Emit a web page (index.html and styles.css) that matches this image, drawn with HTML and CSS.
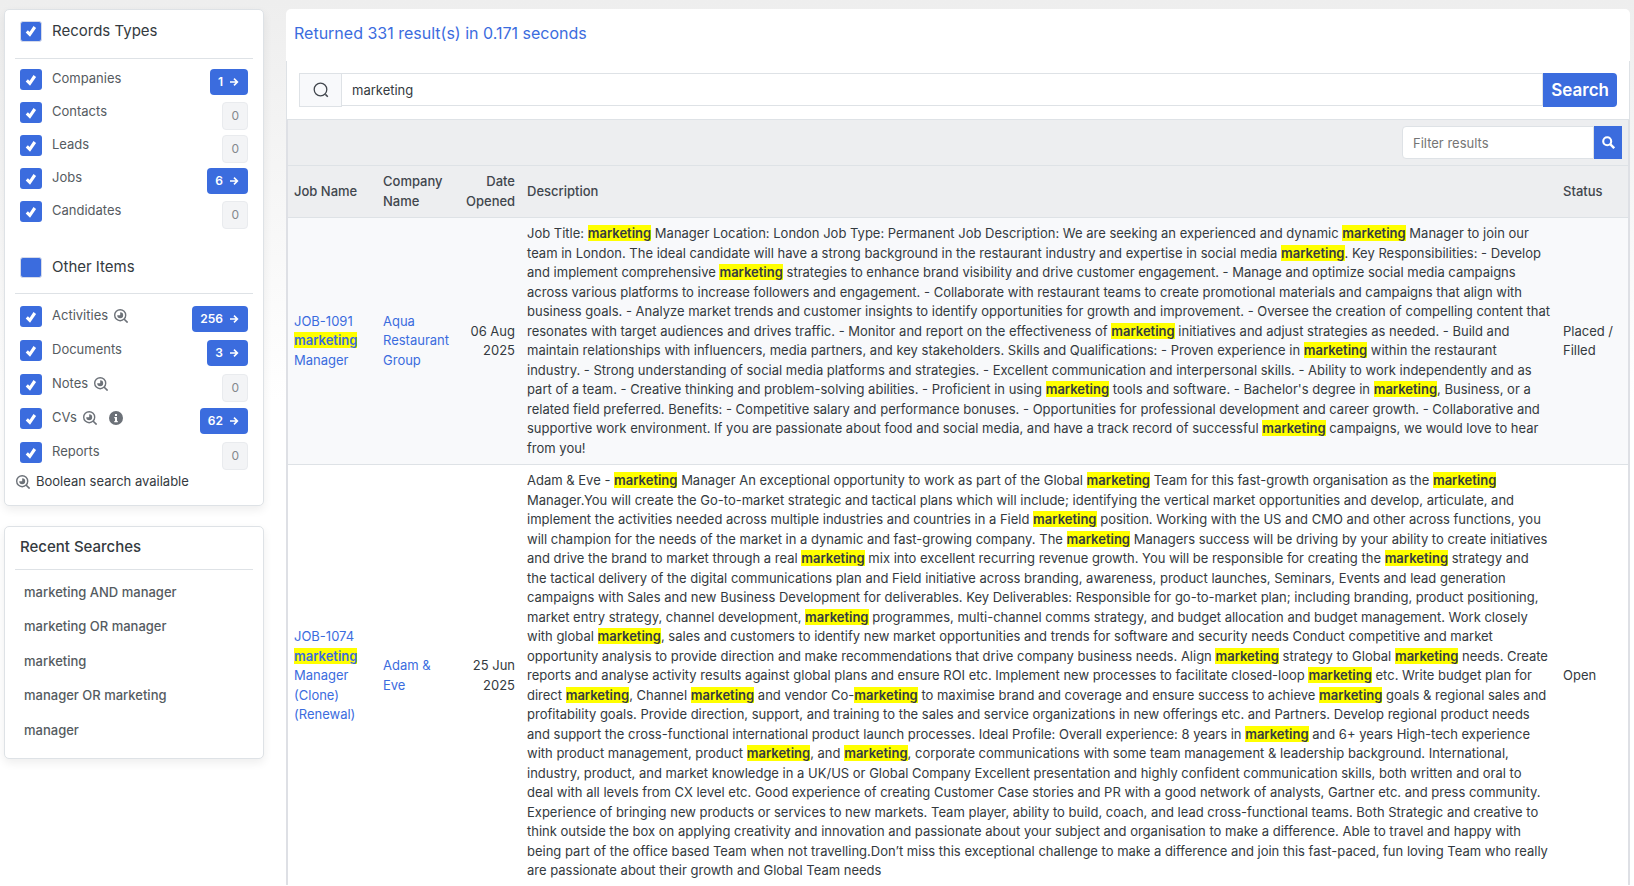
FILE: index.html
```
<!DOCTYPE html>
<html lang="en">
<head>
    <meta charset="UTF-8">
    <meta name="viewport" content="width=device-width, initial-scale=1.0">
    <title>Search Results</title>
    <link rel="stylesheet" href="styles.css">
</head>
<body>
    <!-- shared icons -->
    <svg width="0" height="0" class="sprite">
        <symbol id="bool" viewBox="0 0 14 14">
            <circle cx="6.2" cy="6.2" r="5.5" fill="none" stroke="currentColor" stroke-width="1.4"/>
            <path d="M10 10l3.6 3.6" stroke="currentColor" stroke-width="1.6"/>
            <path d="M6.2 3.2A3 3 0 1 1 3.2 6.2L6.2 6.2z" fill="currentColor"/>
        </symbol>
        <symbol id="arrow" viewBox="0 0 10 10">
            <path d="M1 5h7M5 1.6L8.4 5 5 8.4" fill="none" stroke="currentColor" stroke-width="1.6"/>
        </symbol>
        <symbol id="info" viewBox="0 0 14 14">
            <circle cx="7" cy="7" r="7" fill="currentColor"/>
            <path d="M6 3h2v2H6zM5.3 6H8v4h.8v1.2H5.3V10H6V7.2h-.7z" fill="#fff"/>
        </symbol>
    </svg>

    <div class="layout">
        <aside class="sidebar">
            <div class="card">
                <div class="card-title">
                    <input type="checkbox" id="records" checked>
                    <label for="records">Records Types</label>
                </div>
                <ul class="types">
                    <li><input type="checkbox" id="companies" checked><label for="companies">Companies</label><a href="#" class="badge">1 <svg class="arrow"><use href="#arrow"/></svg></a></li>
                    <li><input type="checkbox" id="contacts" checked><label for="contacts">Contacts</label><span class="badge empty">0</span></li>
                    <li><input type="checkbox" id="leads" checked><label for="leads">Leads</label><span class="badge empty">0</span></li>
                    <li><input type="checkbox" id="jobs" checked><label for="jobs">Jobs</label><a href="#" class="badge">6 <svg class="arrow"><use href="#arrow"/></svg></a></li>
                    <li><input type="checkbox" id="candidates" checked><label for="candidates">Candidates</label><span class="badge empty">0</span></li>
                </ul>
                <div class="card-title other">
                    <input type="checkbox" id="other">
                    <label for="other">Other Items</label>
                </div>
                <ul class="types items">
                    <li><input type="checkbox" id="activities" checked><label for="activities">Activities</label><svg class="icon"><use href="#bool"/></svg><a href="#" class="badge">256 <svg class="arrow"><use href="#arrow"/></svg></a></li>
                    <li><input type="checkbox" id="documents" checked><label for="documents">Documents</label><a href="#" class="badge">3 <svg class="arrow"><use href="#arrow"/></svg></a></li>
                    <li><input type="checkbox" id="notes" checked><label for="notes">Notes</label><svg class="icon"><use href="#bool"/></svg><span class="badge empty">0</span></li>
                    <li><input type="checkbox" id="cvs" checked><label for="cvs">CVs</label><svg class="icon"><use href="#bool"/></svg><svg class="icon info"><use href="#info"/></svg><a href="#" class="badge">62 <svg class="arrow"><use href="#arrow"/></svg></a></li>
                    <li><input type="checkbox" id="reports" checked><label for="reports">Reports</label><span class="badge empty">0</span></li>
                </ul>
                <div class="note"><svg class="icon"><use href="#bool"/></svg>Boolean search available</div>
            </div>

            <div class="card recent">
                <h2>Recent Searches</h2>
                <ul>
                    <li><a href="#">marketing AND manager</a></li>
                    <li><a href="#">marketing OR manager</a></li>
                    <li><a href="#">marketing</a></li>
                    <li><a href="#">manager OR marketing</a></li>
                    <li><a href="#">manager</a></li>
                </ul>
            </div>
        </aside>

        <main class="results">
            <h1>Returned 331 result(s) in 0.171 seconds</h1>
            <form class="search">
                <label for="q" class="search-icon" aria-label="Search">
                    <svg width="16" height="16" viewBox="0 0 16 16"><circle cx="7.5" cy="7.5" r="6.3" fill="none" stroke="#41464d" stroke-width="1.3"/><path d="M12.4 12.4l2.4 2.4" stroke="#41464d" stroke-width="1.5"/></svg>
                </label>
                <input type="text" id="q" value="marketing">
                <button type="submit">Search</button>
            </form>
            <div class="panel">
                <form class="filter">
                    <input type="text" placeholder="Filter results" aria-label="Filter results">
                    <button type="submit" aria-label="Filter">
                        <svg width="13" height="13" viewBox="0 0 13 13"><circle cx="5.2" cy="5.2" r="4" fill="none" stroke="#fff" stroke-width="2.1"/><path d="M8.2 8.2l4 4" stroke="#fff" stroke-width="2.4"/></svg>
                    </button>
                </form>
                <table>
                    <colgroup>
                        <col class="col-job">
                        <col class="col-company">
                        <col class="col-date">
                        <col>
                        <col class="col-status">
                    </colgroup>
                    <thead>
                        <tr>
                            <th>Job Name</th>
                            <th>Company Name</th>
                            <th class="date">Date Opened</th>
                            <th>Description</th>
                            <th>Status</th>
                        </tr>
                    </thead>
                    <tbody>
                        <tr>
                            <td><a href="#">JOB-1091 <mark>marketing</mark> Manager</a></td>
                            <td><a href="#">Aqua Restaurant Group</a></td>
                            <td class="date">06 Aug 2025</td>
                            <td>Job Title: <mark>marketing</mark> Manager Location: London Job Type: Permanent Job Description: We are seeking an experienced and dynamic <mark>marketing</mark> Manager to join our team in London. The ideal candidate will have a strong background in the restaurant industry and expertise in social media <mark>marketing</mark>. Key Responsibilities: - Develop and implement comprehensive <mark>marketing</mark> strategies to enhance brand visibility and drive customer engagement. - Manage and optimize social media campaigns across various platforms to increase followers and engagement. - Collaborate with restaurant teams to create promotional materials and campaigns that align with business goals. - Analyze market trends and customer insights to identify opportunities for growth and improvement. - Oversee the creation of compelling content that resonates with target audiences and drives traffic. - Monitor and report on the effectiveness of <mark>marketing</mark> initiatives and adjust strategies as needed. - Build and maintain relationships with influencers, media partners, and key stakeholders. Skills and Qualifications: - Proven experience in <mark>marketing</mark> within the restaurant industry. - Strong understanding of social media platforms and strategies. - Excellent communication and interpersonal skills. - Ability to work independently and as part of a team. - Creative thinking and problem-solving abilities. - Proficient in using <mark>marketing</mark> tools and software. - Bachelor's degree in <mark>marketing</mark>, Business, or a related field preferred. Benefits: - Competitive salary and performance bonuses. - Opportunities for professional development and career growth. - Collaborative and supportive work environment. If you are passionate about food and social media, and have a track record of successful <mark>marketing</mark> campaigns, we would love to hear from you!</td>
                            <td>Placed / Filled</td>
                        </tr>
                        <tr>
                            <td><a href="#">JOB-1074 <mark>marketing</mark> Manager (Clone) (Renewal)</a></td>
                            <td><a href="#">Adam &amp; Eve</a></td>
                            <td class="date">25 Jun 2025</td>
                            <td>Adam &amp; Eve - <mark>marketing</mark> Manager An exceptional opportunity to work as part of the Global <mark>marketing</mark> Team for this fast-growth organisation as the <mark>marketing</mark> Manager.You will create the Go-to-market strategic and tactical plans which will include; identifying the vertical market opportunities and develop, articulate, and implement the activities needed across multiple industries and countries in a Field <mark>marketing</mark> position. Working with the US and CMO and other across functions, you will champion for the needs of the market in a dynamic and fast-growing company. The <mark>marketing</mark> Managers success will be driving by your ability to create initiatives and drive the brand to market through a real <mark>marketing</mark> mix into excellent recurring revenue growth. You will be responsible for creating the <mark>marketing</mark> strategy and the tactical delivery of the digital communications plan and Field initiative across branding, awareness, product launches, Seminars, Events and lead generation campaigns with Sales and new Business Development for deliverables. Key Deliverables: Responsible for go-to-market plan; including branding, product positioning, market entry strategy, channel development, <mark>marketing</mark> programmes, multi-channel comms strategy, and budget allocation and budget management. Work closely with global <mark>marketing</mark>, sales and customers to identify new market opportunities and trends for software and security needs Conduct competitive and market opportunity analysis to provide direction and make recommendations that drive company business needs. Align <mark>marketing</mark> strategy to Global <mark>marketing</mark> needs. Create reports and analyse activity results against global plans and ensure ROI etc. Implement new processes to facilitate closed-loop <mark>marketing</mark> etc. Write budget plan for direct <mark>marketing</mark>, Channel <mark>marketing</mark> and vendor Co-<mark>marketing</mark> to maximise brand and coverage and ensure success to achieve <mark>marketing</mark> goals &amp; regional sales and profitability goals. Provide direction, support, and training to the sales and service organizations in new offerings etc. and Partners. Develop regional product needs and support the cross-functional international product launch processes. Ideal Profile: Overall experience: 8 years in <mark>marketing</mark> and 6+ years High-tech experience with product management, product <mark>marketing</mark>, and <mark>marketing</mark>, corporate communications with some team management &amp; leadership background. International, industry, product, and market knowledge in a UK/US or Global Company Excellent presentation and highly confident communication skills, both written and oral to deal with all levels from CX level etc. Good experience of creating Customer Case stories and PR with a good network of analysts, Gartner etc. and press community. Experience of bringing new products or services to new markets. Team player, ability to build, coach, and lead cross-functional teams. Both Strategic and creative to think outside the box on applying creativity and innovation and passionate about your subject and organisation to make a difference. Able to travel and happy with being part of the office based Team when not travelling.Don’t miss this exceptional challenge to make a difference and join this fast-paced, fun loving Team who really are passionate about their growth and Global Team needs</td>
                            <td>Open</td>
                        </tr>
                    </tbody>
                </table>
            </div>
        </main>
    </div>
</body>
</html>
```

FILE: styles.css
```
* {
    box-sizing: border-box;
}
html {
    background: #fff;
}
body {
    margin: 0;
    font-family: Inter, "Liberation Sans", sans-serif;
    font-size: 13px;
    line-height: 1.5;
    color: #343a40;
    background: linear-gradient(#eeeeee, #ffffff 400px) no-repeat;
}
a {
    color: #3b6cde;
    text-decoration: none;
}
ul {
    list-style: none;
    margin: 0;
    padding: 0;
}
input, button {
    font-family: inherit;
    font-size: 13px;
    margin: 0;
}
.sprite {
    position: absolute;
}
.layout {
    display: flex;
    align-items: flex-start;
    gap: 22px;
    padding: 9px 4px 0;
}

/* sidebar */
.sidebar {
    width: 260px;
    flex: none;
}
.card {
    background: #fff;
    border: 1px solid #dee2e6;
    border-radius: 5px;
    padding: 0 10px 13px;
    margin-bottom: 20px;
    box-shadow: 0 4px 10px rgba(0, 0, 0, 0.07);
}
.card-title {
    display: flex;
    align-items: center;
    height: 49px;
    padding: 0 5px 6px;
    border-bottom: 1px solid #dee2e6;
    font-size: 15px;
    color: #343a40;
}
.card-title.other {
    margin-top: 13px;
    height: 47px;
    padding-bottom: 5px;
}
input[type="checkbox"] {
    appearance: none;
    flex: none;
    width: 22px;
    height: 21px;
    border-radius: 3px;
    background: #3b6cde;
    margin-right: 10px;
}
.card-title input[type="checkbox"] {
    border: 1px solid #d5daea;
}
input[type="checkbox"]:checked {
    background: #3b6cde url("data:image/svg+xml,%3Csvg xmlns='http://www.w3.org/2000/svg' viewBox='0 0 12 12'%3E%3Cpath d='M1.8 6.4l3 2.9L9.8 2' fill='none' stroke='%23fff' stroke-width='3.1'/%3E%3C/svg%3E") center / 12px 12px no-repeat;
}
.types {
    padding-top: 10px;
}
.types li {
    display: flex;
    align-items: flex-start;
    height: 33px;
    padding: 0 5px;
    color: #555b61;
}
.types.items {
    padding-top: 12px;
}
.types.items li {
    height: 34px;
}
.badge {
    display: flex;
    align-items: center;
    gap: 6px;
    height: 26px;
    margin-left: auto;
    padding: 0 9px 0 8px;
    border-radius: 4px;
    background: #3b6cde;
    color: #fff;
    font-size: 12px;
    font-weight: 600;
}
.badge.empty {
    height: 28px;
    padding: 0 8px;
    border: 1px solid #e9ebee;
    background: #f3f4f6;
    color: #84888d;
    font-weight: 400;
}
.arrow {
    width: 10px;
    height: 10px;
}
.icon {
    width: 14px;
    height: 14px;
    margin: 3px 0 0 6px;
    color: #6c7178;
}
.icon.info {
    margin-left: 12px;
}
.note {
    display: flex;
    margin-top: -4px;
}
.note .icon {
    margin: 3px 6px 0 1px;
}
.recent {
    padding-bottom: 10px;
}
.recent h2 {
    margin: 0;
    height: 43px;
    padding: 9px 5px 0;
    border-bottom: 1px solid #dee2e6;
    font-size: 15px;
    font-weight: 500;
}
.recent ul {
    padding-top: 6px;
}
.recent li {
    padding: 7px 9px 8px;
}
.recent a {
    color: #555b61;
    font-weight: 500;
}

/* results */
.results {
    flex: 1;
    min-width: 0;
    background: #fff;
    border-radius: 5px 5px 0 0;
}
h1 {
    margin: 0;
    height: 52px;
    padding: 12px 8px 0;
    font-size: 16px;
    font-weight: 400;
    color: #3b6cde;
}
.search {
    display: flex;
    padding: 12px;
    border: 1px solid #dee2e6;
    border-top: 0;
}
.search-icon {
    display: flex;
    align-items: center;
    justify-content: center;
    width: 43px;
    height: 34px;
    background: #f8f9fb;
    border: 1px solid #dee2e6;
}
.search input {
    flex: 1;
    height: 33px;
    padding: 0 10px;
    border: 1px solid #dee2e6;
    border-left: 0;
    color: #343a40;
}
.search button {
    height: 34px;
    padding: 0 8px;
    border: 0;
    border-radius: 0 4px 4px 0;
    background: #3b6cde;
    color: #fff;
    font-size: 17px;
    font-weight: 600;
}
.panel {
    border: 2px solid #dee0e5;
    border-width: 0 2px;
}
.filter {
    display: flex;
    justify-content: flex-end;
    padding: 6px;
    background: #edeef0;
    border-bottom: 1px solid #dee2e6;
}
.filter input {
    width: 192px;
    height: 33px;
    padding: 0 10px;
    border: 1px solid #dee2e6;
    border-radius: 4px 0 0 4px;
}
.filter button {
    display: flex;
    align-items: center;
    justify-content: center;
    width: 28px;
    height: 33px;
    padding: 0;
    border: 0;
    background: #3b6cde;
}
table {
    width: 100%;
    table-layout: fixed;
    border-collapse: collapse;
}
.col-job {
    width: 89px;
}
.col-company {
    width: 83px;
}
.col-date {
    width: 61px;
}
.col-status {
    width: 71px;
}
th, td {
    padding: 6px;
    text-align: left;
    vertical-align: middle;
    border-bottom: 1px solid #dee2e6;
}
tbody tr:last-child td {
    padding-bottom: 4px;
    border-bottom: 0;
}
th {
    font-weight: 500;
    color: #41464d;
    background: #edeef0;
}
.date {
    text-align: right;
}
tbody tr:nth-child(odd) {
    background: #f8f9fb;
}
mark {
    background: #ffff00;
    color: inherit;
    font-weight: 600;
}
```
